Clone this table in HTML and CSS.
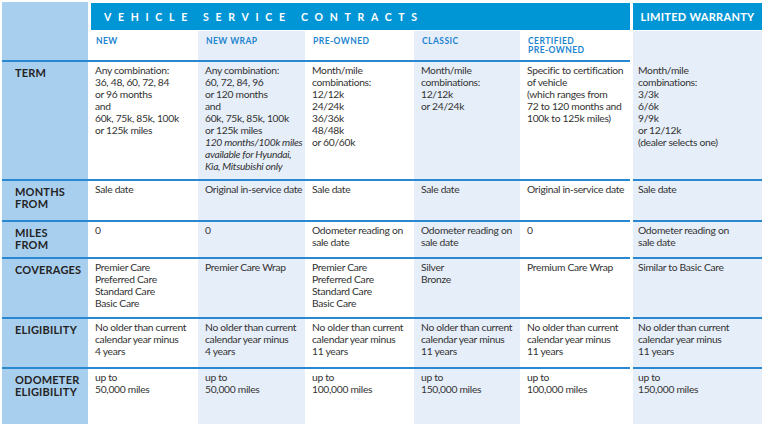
FILE: index.html
```html
<!DOCTYPE html>
<html>
<head>
<meta charset="utf-8">
<link rel="stylesheet" href="styles.css">
</head>
<body>
<div class="table">
  <!-- row 1: title bars -->
  <div class="lab top"></div>
  <div class="bar vsc">VEHICLE SERVICE CONTRACTS</div>
  <div class="gap"></div>
  <div class="bar lw">LIMITED WARRANTY</div>

  <!-- row 2: sub headers -->
  <div class="lab"></div>
  <div class="sub w">NEW</div>
  <div class="sub l">NEW WRAP</div>
  <div class="sub w">PRE-OWNED</div>
  <div class="sub l">CLASSIC</div>
  <div class="sub w">CERTIFIED<br>PRE-OWNED</div>
  <div class="gap"></div>
  <div class="sub l"></div>

  <!-- TERM -->
  <div class="lab ln">TERM</div>
  <div class="cell w ln">Any combination:<br>36, 48, 60, 72, 84<br>or 96 months<br>and<br>60k, 75k, 85k, 100k<br>or 125k miles</div>
  <div class="cell l ln">Any combination:<br>60, 72, 84, 96<br>or 120 months<br>and<br>60k, 75k, 85k, 100k<br>or 125k miles<br><i>120 months/100k miles<br>available for Hyundai,<br>Kia, Mitsubishi only</i></div>
  <div class="cell w ln">Month/mile<br>combinations:<br>12/12k<br>24/24k<br>36/36k<br>48/48k<br>or 60/60k</div>
  <div class="cell l ln">Month/mile<br>combinations:<br>12/12k<br>or 24/24k</div>
  <div class="cell w ln">Specific to certification<br>of vehicle<br>(which ranges from<br>72 to 120 months and<br>100k to 125k miles)</div>
  <div class="gap"></div>
  <div class="cell l wa nol">Month/mile<br>combinations:<br>3/3k<br>6/6k<br>9/9k<br>or 12/12k<br>(dealer selects one)</div>

  <!-- MONTHS FROM -->
  <div class="lab ln">MONTHS<br>FROM</div>
  <div class="cell w ln">Sale date</div>
  <div class="cell l ln">Original in-service date</div>
  <div class="cell w ln">Sale date</div>
  <div class="cell l ln">Sale date</div>
  <div class="cell w ln">Original in-service date</div>
  <div class="gap"></div>
  <div class="cell l wa ln">Sale date</div>

  <!-- MILES FROM -->
  <div class="lab ln">MILES<br>FROM</div>
  <div class="cell w ln">0</div>
  <div class="cell l ln">0</div>
  <div class="cell w ln">Odometer reading on<br>sale date</div>
  <div class="cell l ln">Odometer reading on<br>sale date</div>
  <div class="cell w ln">0</div>
  <div class="gap"></div>
  <div class="cell l wa ln">Odometer reading on<br>sale date</div>

  <!-- COVERAGES -->
  <div class="lab ln">COVERAGES</div>
  <div class="cell w ln">Premier Care<br>Preferred Care<br>Standard Care<br>Basic Care</div>
  <div class="cell l ln">Premier Care Wrap</div>
  <div class="cell w ln">Premier Care<br>Preferred Care<br>Standard Care<br>Basic Care</div>
  <div class="cell l ln">Silver<br>Bronze</div>
  <div class="cell w ln">Premium Care Wrap</div>
  <div class="gap"></div>
  <div class="cell l wa ln">Similar to Basic Care</div>

  <!-- ELIGIBILITY -->
  <div class="lab ln">ELIGIBILITY</div>
  <div class="cell w ln">No older than current<br>calendar year minus<br>4 years</div>
  <div class="cell l ln">No older than current<br>calendar year minus<br>4 years</div>
  <div class="cell w ln">No older than current<br>calendar year minus<br>11 years</div>
  <div class="cell l ln">No older than current<br>calendar year minus<br>11 years</div>
  <div class="cell w ln">No older than current<br>calendar year minus<br>11 years</div>
  <div class="gap"></div>
  <div class="cell l wa ln">No older than current<br>calendar year minus<br>11 years</div>

  <!-- ODOMETER ELIGIBILITY -->
  <div class="lab ln">ODOMETER<br>ELIGIBILITY</div>
  <div class="cell w ln">up to<br>50,000 miles</div>
  <div class="cell l ln">up to<br>50,000 miles</div>
  <div class="cell w ln">up to<br>100,000 miles</div>
  <div class="cell l ln">up to<br>150,000 miles</div>
  <div class="cell w ln">up to<br>100,000 miles</div>
  <div class="gap"></div>
  <div class="cell l wa ln">up to<br>150,000 miles</div>
</div>
</body>
</html>
```

FILE: styles.css
```css
html, body {
  margin: 0;
  padding: 0;
  background: #ffffff;
}
body {
  font-family: Lato, "Open Sans", sans-serif;
  color: #333333;
}
.table {
  display: grid;
  grid-template-columns: 86px 110px 107px 109px 106px 110px 3px 129px;
  grid-template-rows: 29px 29px 119px 41px 37px 60px 50px 57px;
  padding: 2px 2px 0 2px;
  width: 760px;
}
.lab {
  background: #a9cfef;
  color: #242424;
  font-weight: 700;
  font-size: 11px;
  line-height: 11.5px;
  padding: 5px 0 0 13px;
  letter-spacing: 0.2px;
  white-space: nowrap;
}
.lab.top {
  padding: 0;
}
.bar {
  background: #0096d6;
  color: #ffffff;
  font-weight: 700;
  display: flex;
  align-items: center;
  margin: 1px 0 1px 0;
  white-space: nowrap;
}
.vsc {
  grid-column: 2 / 7;
  margin-left: 3px;
  padding-left: 13px;
  font-size: 10.5px;
  letter-spacing: 6.7px;
}
.lw {
  justify-content: center;
  font-size: 11px;
  letter-spacing: 0.3px;
  margin-right: 0;
}
.gap {
  background: #ffffff;
}
.w {
  background: #ffffff;
}
.l {
  background: #e6eef9;
}
.sub {
  color: #1b84cf;
  font-weight: 700;
  font-size: 8.5px;
  line-height: 9px;
  letter-spacing: 0.45px;
  padding: 6px 0 0 8px;
  white-space: nowrap;
}
.cell {
  font-size: 10.3px;
  line-height: 12px;
  letter-spacing: -0.3px;
  padding: 2px 0 0 7px;
  white-space: nowrap;
}
.cell.wa {
  padding-left: 5px;
}
.ln {
  border-top: 2px solid #2a88d0;
}
.nol {
  border-top: 2px solid transparent;
}
i {
  font-style: italic;
}
```
